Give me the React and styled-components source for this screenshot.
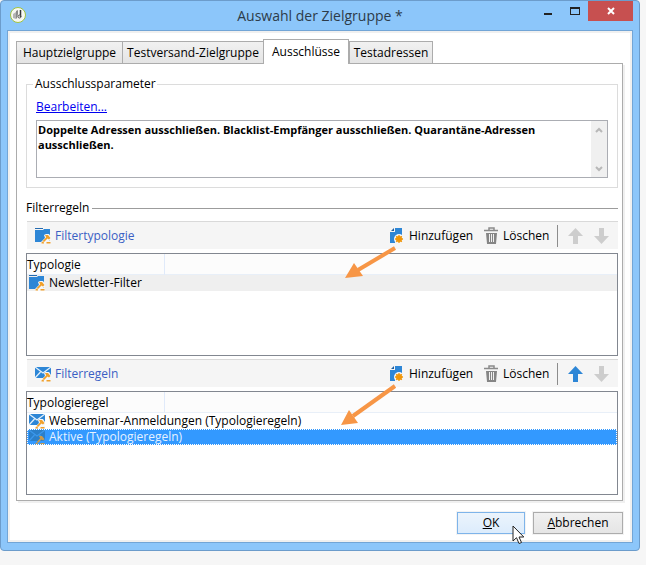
import React, { useState } from "react";
import styled, { createGlobalStyle } from "styled-components";

const GlobalStyle = createGlobalStyle`
  * { box-sizing: border-box; }
  body {
    margin: 0;
    background: #f6f6f6;
    color: #000;
    font-family: "Open Sans", "Noto Sans", sans-serif;
    font-size: 12px;
    line-height: 16px;
  }
  button, textarea { font: inherit; color: inherit; }
`;

const Window = styled.div`
  margin-right: 6px;
  padding: 0 6px 7px;
  border: 1px solid #6c9ccb;
  border-radius: 4px;
  background: #8cc6fa;
`;

const TitleBar = styled.header`
  display: grid;
  grid-template-columns: 96px 1fr 96px;
  align-items: start;
  height: 29px;
`;

const AppIcon = styled.svg`
  display: block;
  margin: 5px 0 0 2px;
`;

const Title = styled.h1`
  margin: 0;
  font-size: 14px;
  font-weight: 400;
  line-height: 29px;
  text-align: center;
  white-space: nowrap;
  color: #2c3b49;
`;

const Controls = styled.div`
  display: flex;
  justify-content: flex-end;
`;

const ControlButton = styled.button`
  display: flex;
  flex: none;
  width: ${(p) => (p.$close ? 45 : 27)}px;
  height: 20px;
  padding: 0;
  border: 0;
  background: ${(p) => (p.$close ? "#c75050" : "transparent")};
  align-items: center;
  justify-content: center;
`;

const Client = styled.main`
  padding: 6px 7px 8px 6px;
  border: 1px solid #72a5d6;
  background: #fff;
  box-shadow: inset 0 0 0 2px #f0f0f0;
`;

const Tabs = styled.div`
  display: flex;
  align-items: flex-end;
  padding: 2px 0 0 2px;
`;

const Tab = styled.button`
  position: relative;
  z-index: ${(p) => (p.$active ? 1 : 0)};
  flex: none;
  width: ${(p) => p.$width}px;
  height: ${(p) => (p.$active ? 25 : 22)}px;
  margin-bottom: ${(p) => (p.$active ? -1 : 0)}px;
  margin-right: ${(p) => (p.$active ? 0 : -1)}px;
  padding: 0 0 ${(p) => (p.$active ? 1 : 0)}px;
  border: 1px solid #acacac;
  border-bottom: 0;
  background: ${(p) => (p.$active ? "#fff" : "linear-gradient(#f1f1f1, #e4e4e4)")};
  white-space: nowrap;
`;

const Panel = styled.section`
  margin: 0 2px 0 2px;
  padding: 12px 4px 5px 9px;
  border: 1px solid #acacac;
  box-shadow: 2px 2px 0 #f0f0f0;
`;

const Group = styled.fieldset`
  min-width: 0;
  margin: 0;
  padding: 7px 9px 9px;
  border: 1px solid #dcdcdc;
  legend {
    margin-left: -3px;
    padding: 0 1px 0 2px;
  }
`;

const Link = styled.a`
  display: table;
  color: #0000f0;
  text-decoration: underline;
`;

const TextFrame = styled.div`
  display: flex;
  height: 58px;
  margin-top: 5px;
  border: 1px solid #abadb3;
`;

const TextArea = styled.textarea`
  flex: 1;
  min-width: 0;
  padding: 1px;
  border: 0;
  outline: 0;
  resize: none;
  overflow: hidden;
  background: #fff;
  font-size: 11px;
  font-weight: 700;
  line-height: 15px;
`;

const ScrollBar = styled.div`
  display: flex;
  flex-direction: column;
  justify-content: space-between;
  width: 16px;
  background: #f0f0f0;
`;

const ScrollButton = styled.button`
  display: flex;
  align-items: center;
  justify-content: center;
  height: 17px;
  padding: 0;
  border: 0;
  background: none;
`;

const SectionTitle = styled.h2`
  display: flex;
  align-items: center;
  gap: 3px;
  margin: 12px 0 5px;
  font-size: 12px;
  font-weight: 400;
  &::after {
    content: "";
    flex: 1;
    height: 1px;
    background: #9c9c9c;
  }
`;

const Block = styled.div`
  position: relative;
  & + & { margin-top: 3px; }
`;

const ToolBar = styled.div`
  display: flex;
  align-items: center;
  height: 28px;
  margin: 0 0 4px 1px;
  padding: 0 9px 0 8px;
  border-top: 1px solid #d9d9d9;
  background: #f5f5f5;
`;

const ToolTitle = styled.span`
  display: flex;
  flex: 1;
  align-items: center;
  gap: 4px;
  color: #3a5fc4;
`;

const ToolButton = styled.button`
  display: flex;
  flex: none;
  align-items: center;
  gap: 4px;
  width: ${(p) => p.$width}px;
  height: 24px;
  padding: 0;
  border: 0;
  background: none;
  white-space: nowrap;
`;

const Divider = styled.span`
  width: 1px;
  height: 22px;
  margin-right: 10px;
  background: #8c8c8c;
`;

const List = styled.div`
  min-height: ${(p) => p.$minHeight}px;
  border: 1px solid #828790;
  background: #fff;
`;

const Table = styled.table`
  width: 100%;
  border-collapse: separate;
  border-spacing: 0;
  table-layout: fixed;
  th {
    height: 21px;
    padding: 1px 0 0;
    border-bottom: 1px solid #e8eff8;
    background: #fcfcfc;
    font-weight: 400;
    text-align: left;
  }
  th:first-child {
    width: 138px;
    border-right: 1px solid #e0eafa;
  }
  td { padding: 0 0 0 2px; }
`;

const Row = styled.tr`
  height: 16px;
  background: ${(p) => ({ idle: "#efefef", selected: "#3399ff" })[p.$tone] || "#fff"};
  color: ${(p) => (p.$tone === "selected" ? "#e6f2ff" : "#000")};
  outline: ${(p) => (p.$tone === "selected" ? "1px dotted #fff" : "none")};
  outline-offset: -1px;
`;

const Cell = styled.div`
  display: flex;
  align-items: center;
  gap: 4px;
  height: 16px;
  white-space: nowrap;
`;

const Footer = styled.footer`
  display: flex;
  justify-content: flex-end;
  gap: 8px;
  padding: 11px 2px 0 0;
`;

const DialogButton = styled.button`
  position: relative;
  width: ${(p) => p.$width}px;
  height: 22px;
  padding: 0;
  border: 1px solid ${(p) => (p.$hot ? "#7eb4ea" : "#acacac")};
  background: ${(p) => (p.$hot ? "linear-gradient(#ecf4fc, #dcecfc)" : "linear-gradient(#f0f0f0, #e5e5e5)")};
  box-shadow: 0 0 0 1px #f3f3f3;
`;

const Pointer = styled.svg`
  position: absolute;
  left: 54px;
  top: 12px;
  z-index: 2;
`;

const Annotation = styled.svg`
  position: absolute;
  right: ${(p) => p.$right}px;
  top: 25px;
  z-index: 2;
  pointer-events: none;
`;

const Hammer = () => (
  <>
    <path d="M9 7l2-1h3l2 3v3h-2l2 1v3H6v-2l4-4z" fill="#f7f7f7" />
    <path d="M10 7h3l2.500 3-1.500 1.500-1.500-1L9 14l-1.300-1 3.500-3.800zM6.500 14.500l1-1 1.500 1v1H6.500zM11.500 14h4v1.500h-4z" fill="#f0a02c" />
  </>
);

const FolderIcon = () => (
  <svg width="16" height="16" viewBox="0 0 16 16" aria-hidden="true">
    <path d="M0 0h8v1H0z" fill="#246bb0" />
    <path d="M0 2h8l1-1h6v13H0z" fill="#2d86d6" />
    <Hammer />
  </svg>
);

const MailIcon = ({ dim }) => (
  <svg width="16" height="16" viewBox="0 0 16 16" aria-hidden="true">
    <path d="M0 1h16v11H0z" fill={dim ? "#2b7fc9" : "#2d86d6"} />
    <path d="M0 1l8 6 8-6M0 12l5.500-6M16 12l-5.500-6" fill="none" stroke={dim ? "#3c98ec" : "#e6f1fa"} strokeWidth="1.200" />
    {dim ? (
      <path d="M10 7h3l2.500 3-1.500 1.500-1.500-1L9 14l-1.300-1 3.500-3.800zM6.500 14.500l1-1 1.500 1v1H6.500zM11.500 14h4v1.500h-4z" fill="#c99a4b" />
    ) : (
      <Hammer />
    )}
  </svg>
);

const AddIcon = () => (
  <svg width="15" height="17" viewBox="0 0 15 17" aria-hidden="true">
    <path d="M5 1h7v7H8L5 10v6H0V5h5z" fill="#2d86d6" />
    <path d="M4 1v3H1z" fill="#1d5e9f" />
    <circle cx="9" cy="12" r="5" fill="#f5f5f5" />
    <circle cx="9" cy="12" r="3" fill="#f09609" />
    <path d="M9 8v8M5 12h8M6.200 9.200l5.600 5.600M11.800 9.200l-5.600 5.600" stroke="#f09609" strokeWidth="1.300" />
  </svg>
);

const TrashIcon = () => (
  <svg width="15" height="17" viewBox="0 0 15 17" aria-hidden="true">
    <path d="M5 3V1h5v2M0 3.500h14" fill="none" stroke="#8b8b8b" strokeWidth="1.500" />
    <path d="M2 6h11l-1 11H3z" fill="#858585" />
    <path d="M5.500 7v8M7.500 7v8M9.500 7v8" stroke="#f0f0f0" strokeWidth="1" />
  </svg>
);

const ArrowIcon = ({ down, color }) => (
  <svg width="15" height="16" viewBox="0 0 15 16" aria-hidden="true">
    <path d={down ? "M5 0h5v8h5l-7.500 8L0 8h5z" : "M7.500 0L15 8h-5v8H5V8H0z"} fill={color} />
  </svg>
);

const Chevron = ({ down }) => (
  <svg width="8" height="6" viewBox="0 0 8 6" aria-hidden="true">
    <path d={down ? "M1 1l3 3 3-3" : "M1 5l3-3 3 3"} fill="none" stroke="#b8b8b8" strokeWidth="2" />
  </svg>
);

function Tools({ icon, title, upColor }) {
  return (
    <ToolBar role="toolbar" aria-label={title}>
      <ToolTitle>{icon}{title}</ToolTitle>
      <ToolButton type="button" $width={94}><AddIcon />Hinzufügen</ToolButton>
      <ToolButton type="button" $width={73}><TrashIcon />Löschen</ToolButton>
      <Divider />
      <ToolButton type="button" $width={26} aria-label="Nach oben"><ArrowIcon color={upColor} /></ToolButton>
      <ToolButton type="button" $width={15} aria-label="Nach unten"><ArrowIcon down color="#cdcdcd" /></ToolButton>
    </ToolBar>
  );
}

const TABS = [
  ["Hauptzielgruppe", 107],
  ["Testversand-Zielgruppe", 142],
  ["Ausschlüsse", 86],
  ["Testadressen", 84],
];

export default function App() {
  const [active, setActive] = useState("Ausschlüsse");
  return (
    <>
      <GlobalStyle />
      <Window>
        <TitleBar>
          <AppIcon width="18" height="18" viewBox="0 0 18 18" aria-hidden="true">
            <circle cx="9" cy="9" r="7.500" fill="#f7f8f2" stroke="#a2c43e" />
            <path d="M4 8l3-2v7l-3-1z" fill="#b4b4b4" />
            <path d="M7 5l2-1v4l-1 4-1 1z" fill="#8a8a8a" />
            <path d="M11.500 4v7" stroke="#333" strokeWidth="1.500" />
            <circle cx="10.500" cy="10.500" r="1.500" fill="none" stroke="#555" />
          </AppIcon>
          <Title>Auswahl der Zielgruppe *</Title>
          <Controls>
            <ControlButton type="button" aria-label="Minimieren">
              <svg width="8" height="8" viewBox="0 0 8 8"><path d="M0 6h8v2H0z" fill="#222" /></svg>
            </ControlButton>
            <ControlButton type="button" aria-label="Maximieren">
              <svg width="10" height="8" viewBox="0 0 10 8"><path d="M0 0h10v8H0zM1 2v5h8V2z" fillRule="evenodd" fill="#222" /></svg>
            </ControlButton>
            <ControlButton type="button" $close aria-label="Schließen">
              <svg width="8" height="8" viewBox="0 0 8 8"><path d="M1 1l6 6M7 1L1 7" stroke="#fff" strokeWidth="2" /></svg>
            </ControlButton>
          </Controls>
        </TitleBar>
        <Client>
          <Tabs role="tablist">
            {TABS.map(([name, width]) => (
              <Tab key={name} type="button" role="tab" $width={width} $active={name === active} aria-selected={name === active} onClick={() => setActive(name)}>
                {name}
              </Tab>
            ))}
          </Tabs>
          <Panel>
            <Group>
              <legend>Ausschlussparameter</legend>
              <Link href="#bearbeiten">Bearbeiten...</Link>
              <TextFrame>
                <TextArea
                  readOnly
                  aria-label="Ausschlussparameter"
                  value="Doppelte Adressen ausschließen. Blacklist-Empfänger ausschließen. Quarantäne-Adressen ausschließen."
                />
                <ScrollBar>
                  <ScrollButton type="button" aria-label="Nach oben scrollen"><Chevron /></ScrollButton>
                  <ScrollButton type="button" aria-label="Nach unten scrollen"><Chevron down /></ScrollButton>
                </ScrollBar>
              </TextFrame>
            </Group>
            <SectionTitle>Filterregeln</SectionTitle>
            <Block>
              <Tools icon={<FolderIcon />} title="Filtertypologie" upColor="#cdcdcd" />
              <List $minHeight={103}>
                <Table>
                  <thead><tr><th>Typologie</th><th /></tr></thead>
                  <tbody>
                    <Row $tone="idle"><td colSpan={2}><Cell><FolderIcon />Newsletter-Filter</Cell></td></Row>
                  </tbody>
                </Table>
              </List>
              <Annotation $right={221} width="52" height="34" viewBox="0 0 52 34" aria-hidden="true">
                <path d="M50 2L13 24" stroke="#f79646" strokeWidth="4" />
                <path d="M0 32L9 17l9 13z" fill="#f79646" />
              </Annotation>
            </Block>
            <Block>
              <Tools icon={<MailIcon />} title="Filterregeln" upColor="#2d86d6" />
              <List $minHeight={104}>
                <Table>
                  <thead><tr><th>Typologieregel</th><th /></tr></thead>
                  <tbody>
                    <Row><td colSpan={2}><Cell><MailIcon />Webseminar-Anmeldungen (Typologieregeln)</Cell></td></Row>
                    <Row $tone="selected"><td colSpan={2}><Cell><MailIcon dim />Aktive (Typologieregeln)</Cell></td></Row>
                  </tbody>
                </Table>
              </List>
              <Annotation $right={221} width="56" height="44" viewBox="0 0 56 44" aria-hidden="true">
                <path d="M54 2L12 32" stroke="#f79646" strokeWidth="4" />
                <path d="M0 41L8 26l9 13z" fill="#f79646" />
              </Annotation>
            </Block>
          </Panel>
          <Footer>
            <DialogButton type="button" $width={68} $hot>
              <u>O</u>K
              <Pointer width="13" height="20" viewBox="0 0 13 20" aria-hidden="true">
                <path d="M1 1v15l3.500-3.300L7 18.500l2.500-1-2.500-5.500h4.800z" fill="#fff" stroke="#222" />
              </Pointer>
            </DialogButton>
            <DialogButton type="button" $width={90}><u>A</u>bbrechen</DialogButton>
          </Footer>
        </Client>
      </Window>
    </>
  );
}
